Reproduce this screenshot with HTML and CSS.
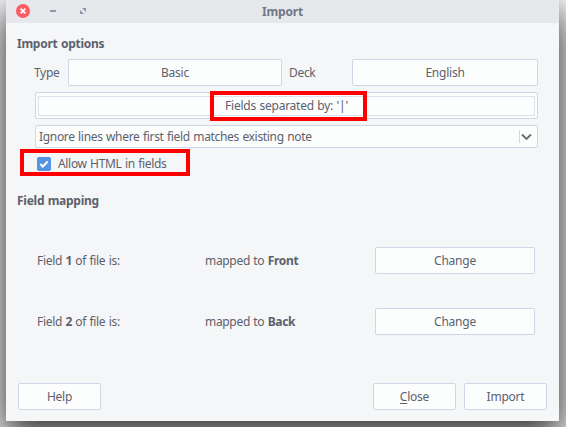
FILE: index.html
```html
<!DOCTYPE html>
<html lang="en">
<head>
<meta charset="utf-8">
<title>Import</title>
<link rel="stylesheet" href="styles.css">
</head>
<body>
<main class="window">
  <header class="titlebar">
    <svg class="controls" width="90" height="23" viewBox="0 0 90 23">
      <circle cx="17" cy="11" r="7" fill="#fb5c66"/>
      <path d="M14.6 8.6l4.8 4.8M19.4 8.6l-4.8 4.8" stroke="#fff" stroke-width="1.8"/>
      <path d="M44 11h6" stroke="#9195a6" stroke-width="2"/>
      <path d="M76 8h4v4zM74 10v4h4z" fill="#9195a6"/>
    </svg>
    <h1 class="title">Import</h1>
  </header>
  <section class="options">
    <h2 class="heading">Import options</h2>
    <div class="pickers">
      <span class="label">Type</span>
      <button class="button">Basic</button>
      <span class="label deck">Deck</span>
      <button class="button">English</button>
    </div>
    <button class="button separator"><span class="focus">Fields separated by: '|'</span><i class="mark mark-separator"></i></button>
    <div class="select">
      <span>Ignore lines where first field matches existing note</span>
      <svg class="arrow" width="20" height="13" viewBox="0 0 20 13"><path d="M.5 0v13" stroke="#d5d8df"/><path d="M3 4.5l4.5 4.5 4.5-4.5" fill="none" stroke="#686575" stroke-width="1.8"/></svg>
    </div>
    <label class="check">
      <svg width="14" height="14" viewBox="0 0 14 14"><rect width="14" height="14" rx="2" fill="#5294e2"/><path d="M3.3 7l2.5 2.5 4.9-5" fill="none" stroke="#fff" stroke-width="2"/></svg>
      <span>Allow HTML in fields</span>
      <i class="mark mark-html"></i>
    </label>
  </section>
  <section class="mapping">
    <h2 class="heading">Field mapping</h2>
    <div class="row"><span>Field <b>1</b> of file is:</span><span>mapped to <b>Front</b></span><button class="button">Change</button></div>
    <div class="row"><span>Field <b>2</b> of file is:</span><span>mapped to <b>Back</b></span><button class="button">Change</button></div>
  </section>
  <footer class="actions">
    <button class="button help">Help</button>
    <button class="button"><span><u>C</u>lose</span></button>
    <button class="button">Import</button>
  </footer>
</main>
</body>
</html>
```
FILE: styles.css
```css
* { box-sizing: border-box; }
html, body { height: 100%; }
body {
  margin: 0;
  overflow: hidden;
  background: #fff;
  color: #5c616c;
  font: 12px/17px "Noto Sans", sans-serif;
  letter-spacing: -.32px;
  word-spacing: .6px;
}
.window {
  display: flex;
  flex-direction: column;
  width: 553px;
  height: 421px;
  margin-left: 6px;
  background: #f5f6f8;
  box-shadow: 0 14px 36px 4px rgba(0, 0, 0, .8);
}
.titlebar {
  position: relative;
  height: 23px;
  background: #e7e8eb;
}
.controls { position: absolute; left: 0; top: 0; }
.title {
  margin: 0;
  padding-top: 3px;
  text-align: center;
  font-size: 12px;
  line-height: 17px;
  letter-spacing: -.2px;
  color: #707689;
}
.options { height: 157px; padding: 12px 21px 0 11px; }
.heading { margin: 0; height: 17px; font-size: 12px; line-height: 17px; letter-spacing: -.26px; }
.button {
  display: flex;
  align-items: center;
  justify-content: center;
  height: 27px;
  padding: 0;
  border: 1px solid #cfd6e6;
  border-radius: 2px;
  background: #fcfdfd;
  color: inherit;
  font: inherit;
  letter-spacing: -.24px;
  word-spacing: inherit;
}
.pickers {
  display: grid;
  grid-template-columns: 34px 214px 70px 186px;
  align-items: center;
  margin: 7px 0 6px 17px;
}
.deck { padding-left: 7px; }
.separator { position: relative; width: 503px; margin-left: 18px; }
.focus {
  width: 497px;
  height: 20px;
  border: 1px solid #dce0ec;
  line-height: 17px;
}
.select {
  display: flex;
  align-items: center;
  justify-content: space-between;
  width: 503px;
  height: 23px;
  margin: 6px 0 0 18px;
  padding-left: 3px;
  border: 1px solid #cfd6e6;
  border-radius: 2px;
  background: #fcfdfd;
}
.arrow { margin-right: -2px; }
.check {
  position: relative;
  display: flex;
  align-items: center;
  gap: 7px;
  width: 150px;
  height: 17px;
  margin: 7px 0 0 20px;
}
.mark { position: absolute; border: 4px solid #f00; }
.mark-separator { left: 174px; top: -2px; width: 157px; height: 30px; }
.mark-html { left: -17px; top: -6px; width: 170px; height: 27px; }
.mapping { padding: 12px 24px 0 11px; }
.row {
  display: grid;
  grid-template-columns: 168px 170px 160px;
  align-items: center;
  margin: 38px 0 34px 20px;
}
.row + .row { margin-top: 0; }
.actions { display: flex; gap: 8px; margin-top: auto; padding: 0 12px 11px; }
.actions .button { width: 83px; }
.actions .help { margin-right: auto; }
u { text-underline-offset: 2px; }
```
